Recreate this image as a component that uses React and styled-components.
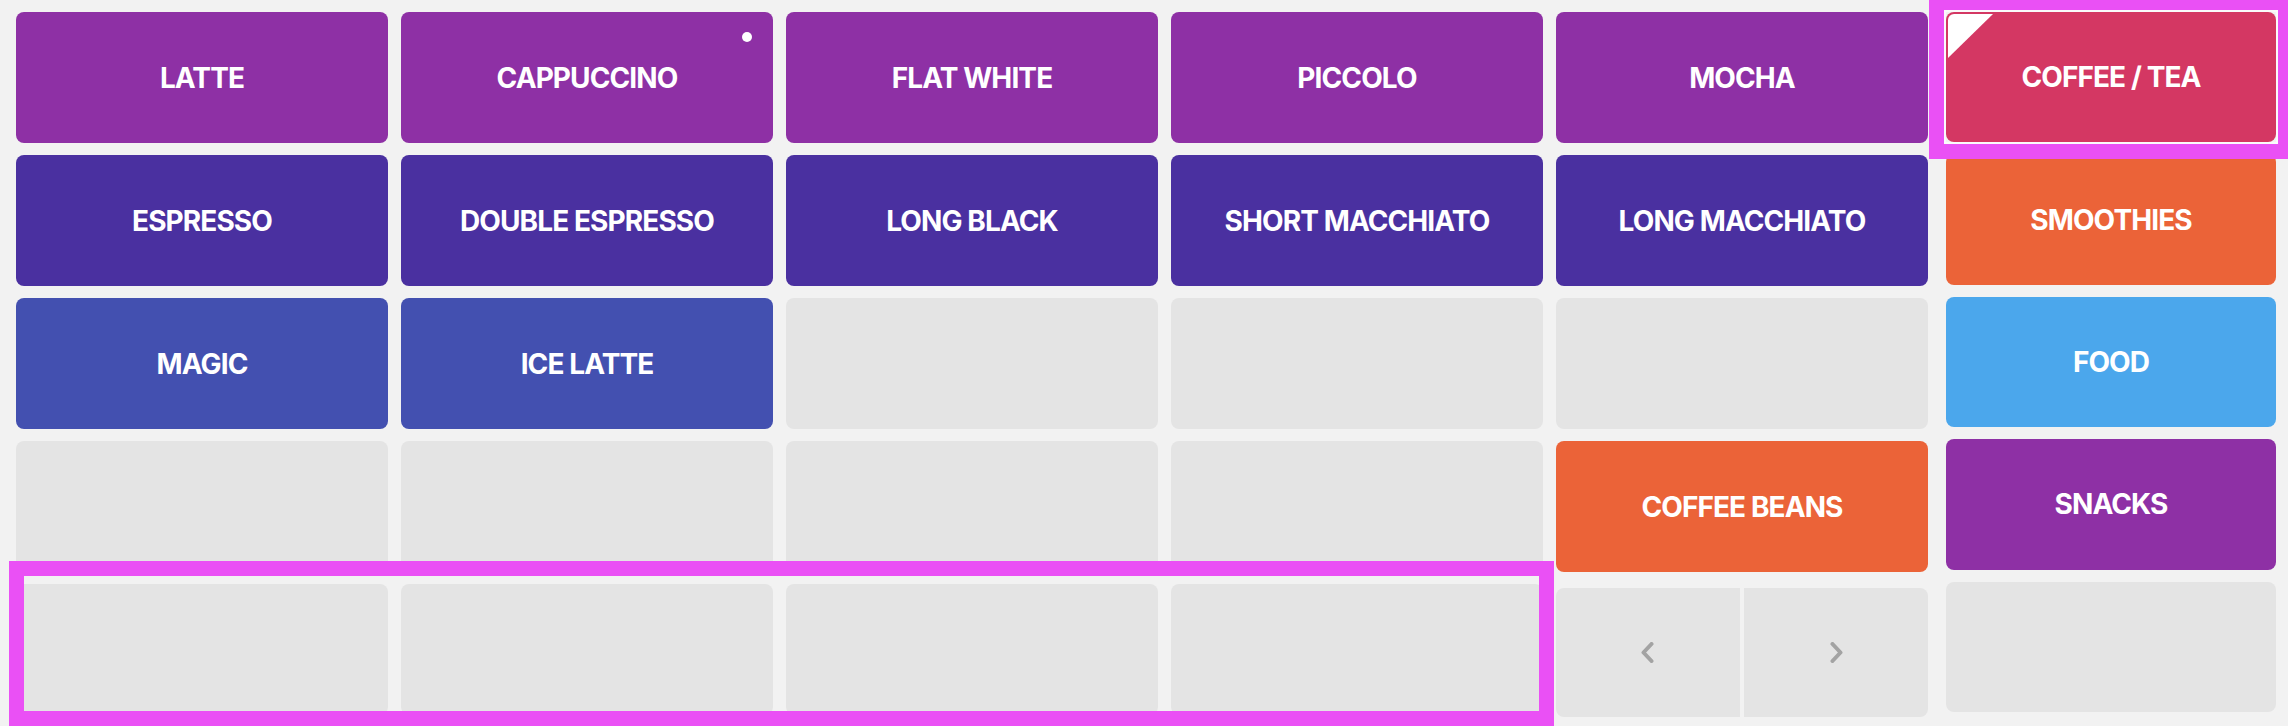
import React from "react";
import styled, { createGlobalStyle } from "styled-components";

const Global = createGlobalStyle`
  html, body {
    margin: 0;
    padding: 0;
    overflow: hidden;
    background: #f2f2f2;
  }
  * {
    box-sizing: border-box;
  }
`;

const colors = {
  purple: "#8e30a5",
  indigo: "#4a30a0",
  blue: "#4350b0",
  red: "#d43763",
  orange: "#eb6338",
  sky: "#4ba7ec",
  empty: "#e4e4e4",
};

const products = [
  ["LATTE", "purple"],
  ["CAPPUCCINO", "purple", true],
  ["FLAT WHITE", "purple"],
  ["PICCOLO", "purple"],
  ["MOCHA", "purple"],
  ["ESPRESSO", "indigo"],
  ["DOUBLE ESPRESSO", "indigo"],
  ["LONG BLACK", "indigo"],
  ["SHORT MACCHIATO", "indigo"],
  ["LONG MACCHIATO", "indigo"],
  ["MAGIC", "blue"],
  ["ICE LATTE", "blue"],
  null,
  null,
  null,
  null,
  null,
  null,
  null,
  ["COFFEE BEANS", "orange"],
  null,
  null,
  null,
  null,
];

const categories = [
  ["COFFEE / TEA", "red", true],
  ["SMOOTHIES", "orange"],
  ["FOOD", "sky"],
  ["SNACKS", "purple"],
  null,
];

function Chevron({ dir }) {
  const pts = dir === "left" ? "10.5,2 2.5,10.5 10.5,19" : "3.5,2 11.5,10.5 3.5,19";
  return (
    <svg width="14" height="21" viewBox="0 0 14 21">
      <polyline
        points={pts}
        fill="none"
        stroke="#a3a3a3"
        strokeWidth="4"
        strokeLinecap="round"
        strokeLinejoin="round"
      />
    </svg>
  );
}

export default function App() {
  return (
    <>
      <Global />
      <Page>
        <Products>
          {products.map((p, i) =>
            p ? (
              <Tile key={i} $bg={colors[p[1]]}>
                {p[0]}
                {p[2] && <Dot />}
              </Tile>
            ) : (
              <Tile key={i} $bg={colors.empty} />
            )
          )}
          <Pager>
            <PageBtn>
              <Chevron dir="left" />
            </PageBtn>
            <PageBtn>
              <Chevron dir="right" />
            </PageBtn>
          </Pager>
        </Products>
        <Categories>
          {categories.map((c, i) =>
            c ? (
              <Tile key={i} $bg={colors[c[1]]} $active={c[2]}>
                {c[0]}
              </Tile>
            ) : (
              <Tile key={i} $bg={colors.empty} />
            )
          )}
        </Categories>
        <Highlight />
      </Page>
    </>
  );
}

const Page = styled.div`
  position: relative;
  display: flex;
  gap: 18px;
  height: 726px;
  padding: 12px 12px 11px 16px;
  background: #f2f2f2;
  font-family: Inter, "Noto Sans", sans-serif;
`;

const Products = styled.div`
  flex: 1;
  display: grid;
  grid-template-columns: repeat(5, 1fr);
  grid-template-rows: repeat(5, 1fr);
  column-gap: 13px;
  row-gap: 12px;
`;

const Categories = styled.div`
  width: 330px;
  display: flex;
  flex-direction: column;
  gap: 12px;
  padding-bottom: 3px;
  & > * {
    flex: 1;
  }
`;

const Tile = styled.div`
  position: relative;
  display: flex;
  align-items: center;
  justify-content: center;
  border-radius: 8px;
  background: ${(p) => p.$bg};
  color: #fff;
  font-size: 28px;
  font-weight: 700;
  letter-spacing: -0.9px;
  white-space: nowrap;

  ${(p) =>
    p.$active &&
    `
    z-index: 2;
    &::before {
      content: "";
      position: absolute;
      top: 2px;
      left: 2px;
      width: 45px;
      height: 44px;
      background: #fff;
      border-top-left-radius: 6px;
      clip-path: polygon(0 0, 100% 0, 0 100%);
    }
    &::after {
      content: "";
      position: absolute;
      inset: -17px;
      border: 15px solid #ea50f5;
      box-shadow: inset 0 0 0 2px #fafafa;
      pointer-events: none;
    }
  `}
`;

const Dot = styled.span`
  position: absolute;
  top: 20px;
  right: 21px;
  width: 10px;
  height: 10px;
  border-radius: 50%;
  background: #fff;
`;

const Pager = styled.div`
  display: flex;
  gap: 4px;
  margin: 4px 0 -2px;
  border-radius: 8px;
  overflow: hidden;
`;

const PageBtn = styled.div`
  flex: 1;
  display: flex;
  align-items: center;
  justify-content: center;
  background: #e4e4e4;
`;

const Highlight = styled.div`
  position: absolute;
  left: 9px;
  top: 561px;
  width: 1545px;
  height: 165px;
  border: 15px solid #ea50f5;
  pointer-events: none;
  z-index: 3;
`;
